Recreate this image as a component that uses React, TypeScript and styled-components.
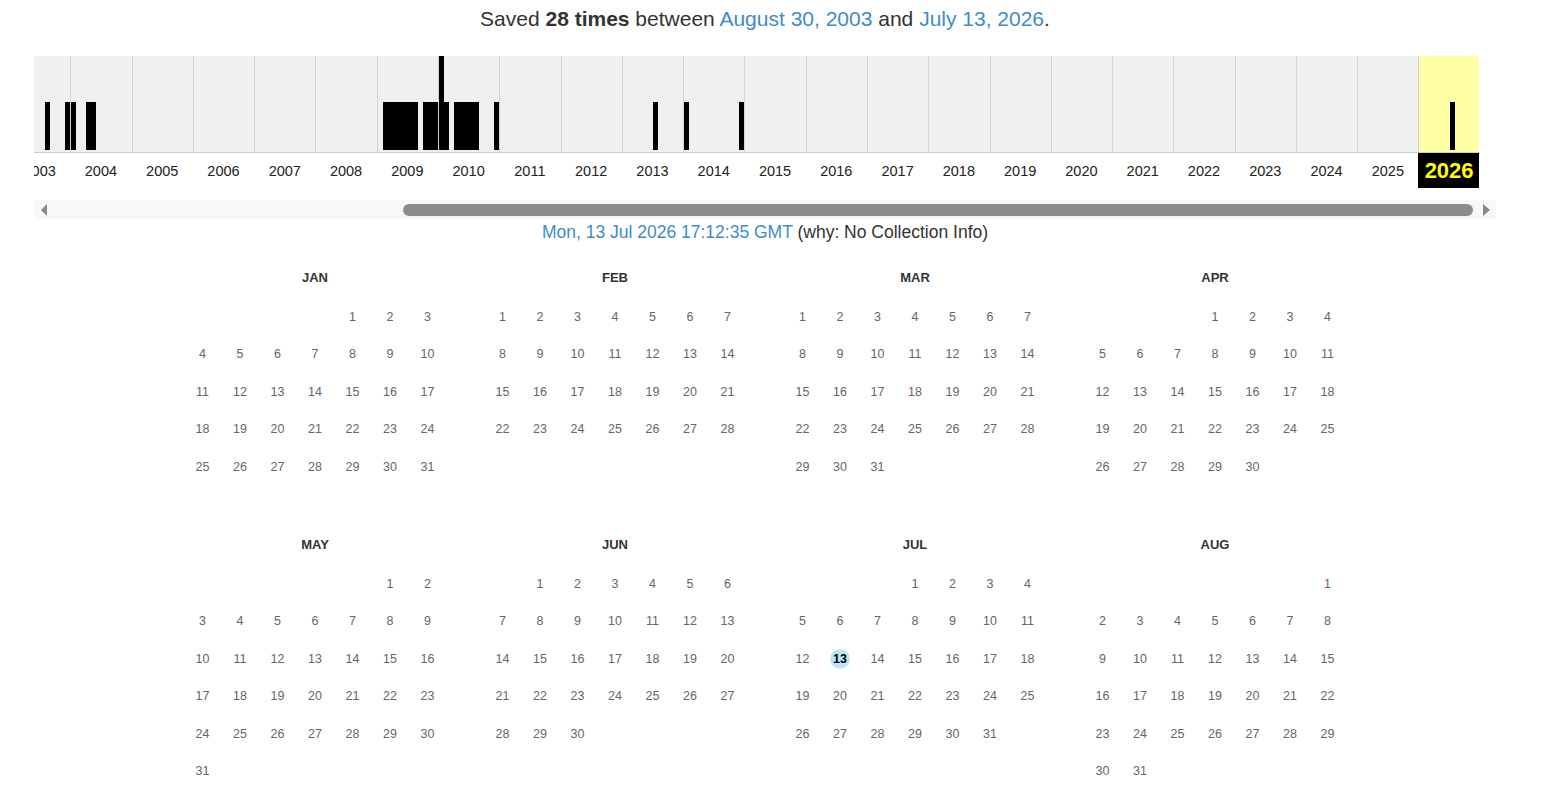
import React from 'react';
import styled, { createGlobalStyle } from 'styled-components';

const GlobalStyle = createGlobalStyle`
  html, body {
    margin: 0;
    padding: 0;
    overflow: hidden;
    background: #fff;
  }
  body {
    font-family: "Liberation Sans", Arial, sans-serif;
    color: #333;
  }
`;

const YEAR = 2026;
const FIRST_YEAR = 2003;
const COLUMN_WIDTH = 61.29;
const SCROLL_OFFSET = 25;
const MONTH_NAMES = ['JAN', 'FEB', 'MAR', 'APR', 'MAY', 'JUN', 'JUL', 'AUG', 'SEP', 'OCT', 'NOV', 'DEC'];

// capture counts per year, one entry per month
const captures: Record<number, number[]> = {
  2003: [0, 0, 0, 0, 0, 0, 0, 1, 0, 0, 0, 1],
  2004: [1, 0, 0, 1, 1, 0, 0, 0, 0, 0, 0, 0],
  2009: [0, 1, 1, 1, 1, 1, 1, 1, 0, 1, 1, 1],
  2010: [2, 1, 0, 1, 1, 1, 1, 1, 0, 0, 0, 1],
  2013: [0, 0, 0, 0, 0, 0, 1, 0, 0, 0, 0, 0],
  2014: [1, 0, 0, 0, 0, 0, 0, 0, 0, 0, 0, 1],
  2026: [0, 0, 0, 0, 0, 0, 1, 0, 0, 0, 0, 0],
};

const years = Array.from({ length: YEAR - FIRST_YEAR + 1 }, (_, i) => FIRST_YEAR + i);

const Page = styled.div`
  width: 1530px;
  padding-top: 8px;
`;

const Summary = styled.div`
  text-align: center;
  font-size: 21px;
  line-height: 22px;
  color: #333;
`;

const Link = styled.a`
  color: #428bca;
  text-decoration: none;
`;

const Timeline = styled.div`
  margin: 26px 0 0 34px;
  width: 1445px;
  overflow: hidden;
`;

const YearStrip = styled.div`
  display: flex;
  margin-left: -${SCROLL_OFFSET}px;
`;

const YearColumn = styled.div`
  flex: 0 0 ${COLUMN_WIDTH}px;
  display: flex;
  flex-direction: column;
`;

const Graph = styled.div<{ $selected?: boolean }>`
  height: 94px;
  padding-bottom: 2px;
  display: flex;
  align-items: flex-end;
  background: ${(p) => (p.$selected ? '#ffffa5' : '#f0f0f0')};
  border-left: 1px solid #d2d2d2;
  border-bottom: 1px solid #ccc;
`;

const MonthSlot = styled.div`
  flex: 1;
  display: flex;
  align-items: flex-end;
  height: 100%;
`;

const Bar = styled.div`
  width: 100%;
  background: #000;
`;

const YearLabel = styled.div<{ $selected?: boolean }>`
  height: 35px;
  display: flex;
  align-items: center;
  justify-content: center;
  font-size: ${(p) => (p.$selected ? '22px' : '14.5px')};
  font-weight: ${(p) => (p.$selected ? 'bold' : 'normal')};
  color: ${(p) => (p.$selected ? '#ff0' : '#222')};
  background: ${(p) => (p.$selected ? '#000' : 'transparent')};
`;

const ScrollBar = styled.div`
  margin: 12px 0 0 34px;
  width: 1462px;
  height: 19px;
  display: flex;
  align-items: center;
  background: #f8f8f8;
`;

const Arrow = styled.div<{ $dir: 'left' | 'right' }>`
  flex: 0 0 20px;
  display: flex;
  justify-content: center;

  &::before {
    content: '';
    border-top: 6px solid transparent;
    border-bottom: 6px solid transparent;
    ${(p) => (p.$dir === 'left' ? 'border-right: 6px solid #888;' : 'border-left: 7px solid #888;')}
  }
`;

const Track = styled.div`
  flex: 1;
  height: 12px;
`;

const Thumb = styled.div`
  height: 12px;
  border-radius: 6px;
  background: #8c8c8c;
`;

const Caption = styled.div`
  margin-top: 2px;
  text-align: center;
  font-size: 17.5px;
  line-height: 22px;
  color: #333;
`;

const Calendar = styled.div`
  margin: 25px auto 0;
  width: 1200px;
  display: grid;
  grid-template-columns: repeat(4, 300px);
  row-gap: 12px;
`;

const Month = styled.div`
  display: flex;
  flex-direction: column;
  align-items: center;
`;

const MonthTitle = styled.div`
  height: 20px;
  line-height: 20px;
  margin-bottom: 10px;
  font-size: 13px;
  font-weight: bold;
  color: #333;
`;

const Days = styled.div`
  display: grid;
  grid-template-columns: repeat(7, 37.5px);
  grid-auto-rows: 37.5px;
`;

const Day = styled.div`
  display: flex;
  align-items: center;
  justify-content: center;
  font-size: 12.5px;
  color: #666;
`;

const Capture = styled.span`
  width: 20px;
  height: 20px;
  border-radius: 50%;
  background: #bde6fa;
  display: flex;
  align-items: center;
  justify-content: center;
  color: #000;
  font-weight: 600;
`;

const YearGraph = ({ year }: { year: number }) => {
  const counts = captures[year] ?? new Array(12).fill(0);
  const selected = year === YEAR;
  return (
    <YearColumn>
      <Graph $selected={selected}>
        {counts.map((c, i) => (
          <MonthSlot key={i}>{c > 0 && <Bar style={{ height: c > 1 ? 94 : 48 }} />}</MonthSlot>
        ))}
      </Graph>
      <YearLabel $selected={selected}>{year}</YearLabel>
    </YearColumn>
  );
};

const MonthView = ({ month }: { month: number }) => {
  const offset = new Date(YEAR, month, 1).getDay();
  const total = new Date(YEAR, month + 1, 0).getDate();
  const cells = Array.from({ length: 42 }, (_, i) => {
    const d = i - offset + 1;
    return d >= 1 && d <= total ? d : null;
  });
  return (
    <Month>
      <MonthTitle>{MONTH_NAMES[month]}</MonthTitle>
      <Days>
        {cells.map((d, i) => (
          <Day key={i}>{d && (month === 6 && d === 13 ? <Capture>{d}</Capture> : d)}</Day>
        ))}
      </Days>
    </Month>
  );
};

export default function App() {
  return (
    <Page>
      <GlobalStyle />
      <Summary>
        Saved <b>28 times</b> between <Link href="#">August 30, 2003</Link> and{' '}
        <Link href="#">July 13, 2026</Link>.
      </Summary>
      <Timeline>
        <YearStrip>
          {years.map((y) => (
            <YearGraph key={y} year={y} />
          ))}
        </YearStrip>
      </Timeline>
      <ScrollBar>
        <Arrow $dir="left" />
        <Track>
          <Thumb style={{ marginLeft: 349, width: 1070 }} />
        </Track>
        <Arrow $dir="right" />
      </ScrollBar>
      <Caption>
        <Link href="#">Mon, 13 Jul 2026 17:12:35 GMT</Link> (why: No Collection Info)
      </Caption>
      <Calendar>
        {MONTH_NAMES.map((_, m) => (
          <MonthView key={m} month={m} />
        ))}
      </Calendar>
    </Page>
  );
}
